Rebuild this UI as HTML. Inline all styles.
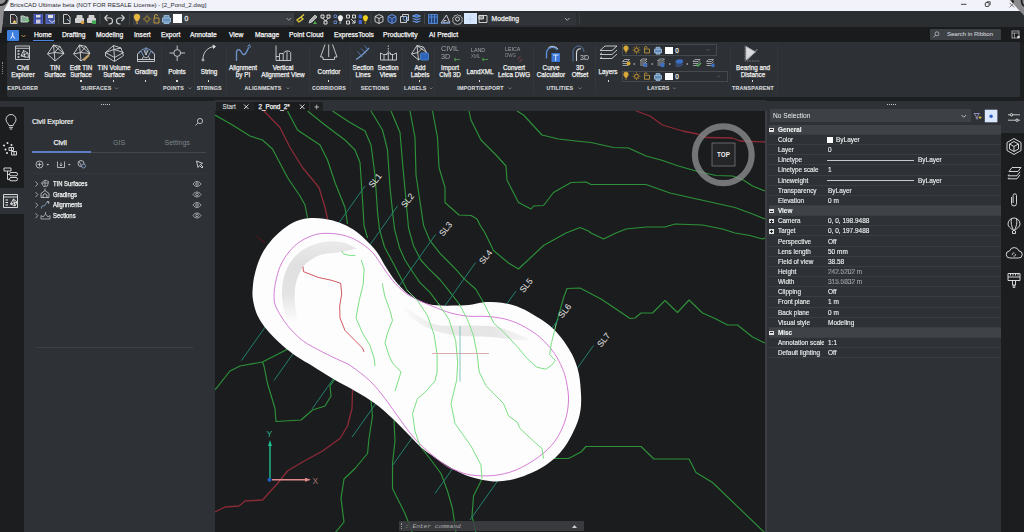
<!DOCTYPE html>
<html><head><meta charset="utf-8"><title>BricsCAD</title>
<style>
*{box-sizing:border-box;margin:0;padding:0}
html,body{width:1024px;height:532px;overflow:hidden;background:#1c1e20;font-family:"Liberation Sans",sans-serif;color:#fff}
.abs,#root *{position:absolute}
#root{position:relative;width:1024px;height:532px;overflow:hidden}
#root svg *{position:static}
#title{left:0;top:0;width:1024px;height:11.2px;background:#f2f2fa;color:#2a2a2e;font-size:6.15px;line-height:11px}
#title span{left:10px;top:-1px;white-space:nowrap}
#tb{left:0;top:11px;width:1024px;height:16px;background:#2b2e31}
#menu{left:0;top:26.5px;width:1024px;height:16px;background:#191b1d}
.tab{top:3px;font-size:6.7px;line-height:9px;white-space:nowrap;color:#f4f4f4;-webkit-text-stroke:.25px #f4f4f4}
#rib{left:7px;top:42px;width:1013px;height:55px;background:#2d3135;border-radius:1.5px}
.rl{font-size:7px;line-height:7.2px;text-align:center;white-space:nowrap;color:#f2f2f2;-webkit-text-stroke:.25px #f2f2f2;transform:translateX(-50%) scaleX(.9)}
.dot{width:1.6px;height:1.3px;background:#d8d8d8}
.it{color:#a4a8ac;line-height:8px;white-space:nowrap;transform:scaleX(.95);transform-origin:0 0}
.gl{font-size:5.3px;line-height:6px;letter-spacing:.2px;font-weight:bold;color:#d2d4d7;-webkit-text-stroke:.15px #d2d4d7;white-space:nowrap;transform:translateX(-50%)}
.dd{width:3px;height:3px}
.sep{top:3px;width:1px;height:49px;background:#33373b}
#lstrip{left:0;top:107px;width:24px;height:425px;background:#1b1d1f}
#lpanel{left:24px;top:100.5px;width:191.5px;height:432px;background:#2e3236}
#lgap{left:215.4px;top:111px;width:.8px;height:421px;background:#34373a}
#dtabs{left:215px;top:100.2px;width:551px;height:11px;background:#2e3236}
#canvas{left:215px;top:111px;width:551px;height:421px;background:#1b1c1e;overflow:hidden}
#rpanel{left:766px;top:100.5px;width:235px;height:432px;background:#2e3236}
#rstrip{left:1000.5px;top:100.5px;width:24px;height:432px;background:#1b1d1f}
.row{left:3px;width:232px;height:10.13px;font-size:7.2px;line-height:10.13px;white-space:nowrap;color:#f2f3f4;-webkit-text-stroke:.12px #f2f3f4;border-bottom:.6px solid #3a3e42}
.row b{left:9.3px;font-weight:normal;font-size:6.9px;transform:scaleX(.92);transform-origin:0 50%}
.row i{left:58.6px;font-style:normal;font-size:6.9px;transform:scaleX(.94);transform-origin:0 50%}
.hdr{background:#3f4347;font-weight:bold}
.hdr b{font-weight:bold;left:9px}
.pm{left:0;top:2.8px;width:4.6px;height:4.4px;background:#e4e4e4}
.pm.plus:before{content:"";position:absolute;left:1.8px;top:.8px;width:.9px;height:2.8px;background:#222}
.pm:after{content:"";position:absolute;left:.9px;top:1.8px;width:2.9px;height:.9px;background:#222}
svg .g{fill:none;stroke:#2d9139;stroke-width:1.15;stroke-linejoin:round}
svg .r{fill:none;stroke:#8c2a36;stroke-width:1.3;stroke-linejoin:round}
svg .dr{fill:none;stroke:#4f1820;stroke-width:1.1}
svg .c{fill:none;stroke:#23806f;stroke-width:1}
svg .m{fill:none;stroke:#cf6fd0;stroke-width:.9}
svg .ig{fill:none;stroke:#7ce084;stroke-width:1;stroke-linejoin:round}
svg .ir{fill:none;stroke:#cf4f5a;stroke-width:.95;stroke-linejoin:round}
svg .sl{font-size:8.6px;fill:#e6e6e6;font-family:"Liberation Sans",sans-serif}
svg .ax{font-size:8.5px;font-family:"Liberation Sans",sans-serif}
svg .top{font-size:6.3px;font-weight:bold;fill:#f0f0f0;font-family:"Liberation Sans",sans-serif}
.tree{left:29px;font-size:6.7px;line-height:9px;white-space:nowrap;color:#f4f4f4;-webkit-text-stroke:.25px #f4f4f4;transform:scaleX(.88);transform-origin:0 50%}
</style></head><body><div id="root">
<div id="title"><span>BricsCAD Ultimate beta (NOT FOR RESALE License) - [2_Pond_2.dwg]</span>
<svg class="abs" style="left:930px;top:0" width="94" height="11" viewBox="930 0 94 11"><path d="M961,4.300h5.500" stroke="#444" stroke-width="1" fill="none"/><rect x="985.300" y="2.600" width="3.800" height="3.800" rx=".8" fill="none" stroke="#333" stroke-width="1"/><path d="M986.800,1.700h3.400v3.400" fill="none" stroke="#333" stroke-width=".8"/><path d="M1009.500,2.800l4.600,4.600M1014.100,2.800l-4.600,4.600" stroke="#555" stroke-width=".8"/></svg></div>
<div id="tb">
<div style="left:132.500px;top:1.500px;width:161px;height:12.500px;background:#3a3d42"></div>
<div style="left:488px;top:1.500px;width:88px;height:12.500px;background:#313438"></div>
<div style="left:464px;top:1.500px;width:12.500px;height:11.500px;background:#d6e6fb"></div>
<div style="left:173px;top:3px;width:8.500px;height:8.500px;background:#fff"></div>
<div style="left:184.500px;top:3.200px;font-size:6.8px;line-height:9px;color:#e6e6e6;-webkit-text-stroke:.3px #e6e6e6">0</div>
<div style="left:491.500px;top:3.200px;font-size:6.8px;line-height:9px;color:#ececec;-webkit-text-stroke:.25px #ececec">Modeling</div>
<svg class="abs" style="left:0;top:0" width="600" height="16" fill="none" stroke-width=".9" stroke="#dcdcdc">
<path d="M2.500,3v10" stroke="#b0b0b0" stroke-dasharray="1 1.200"/>
<path d="M10.500,3.500h4l2.500,2.500v6.500h-6.500z"/><path d="M14.500,9l2,2l-2,2l-2,-2z" fill="#d8c060" stroke="none"/><path d="M12,6l2,3" stroke="#a03050"/>
<path d="M21,5h3l1,1h3v5h-7z" fill="#8a9" stroke="#cfd8d0"/><path d="M25,9.500h4l-1.500,-1.500M29,9.500l-1.500,1.500" stroke="#6c6"/>
<rect x="34" y="3.500" width="8.500" height="9" fill="#3848a8" stroke="#5868c8"/><rect x="36" y="4" width="4.500" height="2.500" fill="#dcdcdc" stroke="none"/><rect x="36" y="8.500" width="4.500" height="4" fill="#c8c8d8" stroke="none"/>
<rect x="46" y="3.500" width="8.500" height="9" fill="#4858a8" stroke="#6878c8"/><rect x="48" y="4" width="5" height="3" fill="#e0e0e0" stroke="none"/><path d="M49,9l3,2.500l3,-2" stroke="#e8e8e8"/>
<path d="M58.500,2.500v11" stroke="#44484c"/>
<path d="M63.500,3.500h4l2.500,2.500v6.500h-6.500z"/><path d="M67,8l3,3" stroke="#a8c8e8"/>
<path d="M75.500,7.500h8v4h-8zM77,7.500v-3h5v3" fill="#cfcfcf"/><circle cx="82.500" cy="11.500" r="1.700" fill="#e0a040" stroke="none"/>
<path d="M87.500,7.500h8v4h-8zM89,7.500v-3h5v3" fill="#cfcfcf"/><rect x="92" y="9.500" width="4" height="3.500" fill="#40a850" stroke="none"/>
<path d="M100,2.500v11" stroke="#44484c"/>
<path d="M104.500,7l3,-3M104.500,7l3,3M104.500,7h5a3,3 0 0 1 0,6h-1" stroke="#d0d0d0" stroke-width="1.100"/>
<path d="M124.500,7l-3,-3M124.500,7l-3,3M124.500,7h-5a3,3 0 0 0 0,6h1" stroke="#d0d0d0" stroke-width="1.100"/>
<path d="M129.500,2.500v11" stroke="#44484c"/>
<path d="M136,10c0,-1.500 -1.800,-2 -1.800,-4a2.800,2.800 0 0 1 5.600,0c0,2 -1.800,2.500 -1.800,4zM136,12h2" fill="#e8b840" stroke="#e8b840"/>
<circle cx="147" cy="8" r="2.300" stroke="#b89030"/><path d="M147,3.800v1M147,11.200v1M142.800,8h1M150.200,8h1" stroke="#b89030"/>
<path d="M154,7h5v5h-5zM154.500,7v-2a1.500,1.500 0 0 1 3,0" stroke="#c8a040"/>
<path d="M162.500,7h8v4h-8zM164,7v-2.500h5v2.500M164,11v1.500h5v-1.500" stroke="#9cc0e0" fill="#6890b8"/>
<path d="M286.500,7l2.300,2.300l2.300,-2.300" stroke="#a8acb0"/>
<path d="M297,9l4,-3l2,2l-4,3zM301,6l3,-2.500" stroke="#e8d040" stroke-width="1.300"/>
<path d="M309,12l1,-3l5,-5l2,2l-5,5z" fill="#b0b0b0" stroke="#c8c8c8"/><path d="M315,10l2,3h-4z" fill="#50b050" stroke="none"/>
<path d="M321,4h3v3h-3zM327,4h3v3h-3zM324,10h3v3h-3zM322.500,7l3,3M328.500,7l-3,3" stroke="#f0f0f0"/>
<path d="M334,4h2.500v2.500h-2.500zM334,10h2.500v2.500h-2.500z" stroke="#6888d0"/><path d="M339.500,10c0,-1.200 -1.300,-1.700 -1.300,-3.200a2.200,2.200 0 0 1 4.400,0c0,1.500 -1.300,2 -1.300,3.200zM339.500,12h1.600" fill="#f0f0f0" stroke="#f0f0f0"/>
<path d="M346.500,4h3v3h-3zM352.500,4h3v3h-3zM346.500,10h3v3h-3zM351,8l4,4M355,9v3h-3" stroke="#ececec"/>
<path d="M359,4h2.500v3h-2.500zM359,9.500h2.500v3h-2.500z" fill="#4060d0" stroke="#4868d8"/><path d="M364.500,10c0,-1.200 -1.300,-1.700 -1.300,-3.200a2.200,2.200 0 0 1 4.400,0c0,1.500 -1.300,2 -1.300,3.200zM364.500,12h1.600" fill="#f0d020" stroke="#f0d020"/>
<path d="M371,2.500v11" stroke="#44484c"/>
<path d="M379,3.500l4,2v5l-4,2l-4,-2v-5zM375,5.500l4,2l4,-2M379,7.500v5"/>
<path d="M392,3.500l4,2v5l-4,2l-4,-2v-5zM388,5.500l4,2l4,-2M392,7.500v5" stroke="#6898e0" fill="#28407a"/>
<path d="M400.500,5.500h6v6h-6zM402.500,5.500v-2h6v6h-2" stroke="#e0e0e0"/><circle cx="405.500" cy="7.500" r="2.200" stroke="#6898e0"/>
<path d="M416.500,3.500l4,1.500l-4,1.500l-4,-1.500zM412.500,7.500l4,1.500l4,-1.500M412.500,10l4,1.500l4,-1.500" stroke="#78a8e8" fill="#3868c0"/>
<path d="M424.500,2.500v11" stroke="#44484c"/>
<path d="M428.500,3.500h9v9h-9zM428.500,6h9M431.500,3.500v9M434.500,3.500v9" stroke="#5888d8" fill="#24487a"/>
<path d="M441,12h9l-3.500,-8zM444,12v-2.500h2.500M446.500,12l2,-2" stroke="#d8d8e8"/><path d="M441,12h9" stroke="#6898e0"/>
<circle cx="457.500" cy="8" r="2"/><path d="M457.500,3.500l1.200,1.300l1.800,-.3l.5,1.700l1.500,1l-.7,1.600l.7,1.600l-1.500,1l-.5,1.700l-1.800,-.3l-1.200,1.300l-1.200,-1.300l-1.800,.3l-.5,-1.700l-1.500,-1l.7,-1.600l-.7,-1.600l1.500,-1l.5,-1.700l1.800,.3z" stroke="#c8c8c8" stroke-width=".8"/>
<path d="M466,8h8.500M470.200,4v8" stroke="#b8d0f0" stroke-width=".7"/>
<path d="M479,4.500h8v7h-8z" stroke="#e0e0e0"/><path d="M479,4.500h4.500v3.500h-4.500z" fill="#8a8e92" stroke="#e0e0e0"/>
<path d="M565,7l2.300,2.300l2.300,-2.300" stroke="#b8bcc0"/>
<path d="M579.500,2v12" stroke="#3a3e42"/>
</svg>
</div>

<div id="menu">
<div style="left:7px;top:3px;width:11.5px;height:11px;background:#3f7fe0;border-radius:1px"></div>
<svg class="abs" style="left:7px;top:3px" width="22" height="11"><path d="M5.700,2.500v3l-2,3M5.700,5.500l2,3" stroke="#fff" stroke-width="1" fill="none"/><path d="M14.500,5l2,2l2,-2" stroke="#c9a04a" stroke-width=".9" fill="none"/></svg>
<div class="tab" style="left:34px">Home</div><div style="left:33px;top:13.5px;width:21px;height:1.3px;background:#4d84e0"></div>
<div class="tab" style="left:62px">Drafting</div>
<div class="tab" style="left:96px">Modeling</div>
<div class="tab" style="left:134px">Insert</div>
<div class="tab" style="left:161px">Export</div>
<div class="tab" style="left:190px">Annotate</div>
<div class="tab" style="left:229px">View</div>
<div class="tab" style="left:255px">Manage</div>
<div class="tab" style="left:289px">Point Cloud</div>
<div class="tab" style="left:334px">ExpressTools</div>
<div class="tab" style="left:383px">Productivity</div>
<div class="tab" style="left:429px">AI Predict</div>
<div style="left:930px;top:2.500px;width:71px;height:11px;background:#3d4145;border-radius:1px"></div>
<svg class="abs" style="left:930px;top:2.500px" width="90" height="11"><circle cx="7" cy="4.800" r="2" fill="none" stroke="#b8bcc0" stroke-width=".8"/><path d="M5.500,6.300l-2,2" stroke="#b8bcc0" stroke-width=".9"/><rect x="82" y="2" width="7" height="7" fill="none" stroke="#b8bcc0" stroke-width=".8"/><path d="M82,4h7M84.500,4v5" stroke="#b8bcc0" stroke-width=".7"/><circle cx="88.500" cy="8" r="1.300" fill="#e0e0e0"/></svg>
<div class="tab" style="left:947px;top:3.500px;font-size:6px;color:#b6babf;-webkit-text-stroke:.2px #b6babf">Search in Ribbon</div>
</div>

<div id="rib">
<div class="rl" style="left:15.8px;top:22.3px">Civil</div>
<div class="rl" style="left:15.8px;top:29.3px">Explorer</div>
<div class="rl" style="left:48.2px;top:22.3px">TIN</div>
<div class="rl" style="left:48.2px;top:29.3px">Surface</div>
<div class="rl" style="left:74.2px;top:22.3px">Edit TIN</div>
<div class="rl" style="left:74.2px;top:29.3px">Surface</div>
<div class="dot" style="left:73.4px;top:38.3px"></div>
<div class="rl" style="left:106.5px;top:22.3px">TIN Volume</div>
<div class="rl" style="left:106.5px;top:29.3px">Surface</div>
<div class="dot" style="left:105.7px;top:38.3px"></div>
<div class="rl" style="left:138.5px;top:26.1px">Grading</div>
<div class="dot" style="left:137.7px;top:38.3px"></div>
<div class="rl" style="left:170.0px;top:26.1px">Points</div>
<div class="dot" style="left:169.2px;top:38.3px"></div>
<div class="rl" style="left:201.5px;top:26.1px">String</div>
<div class="dot" style="left:200.7px;top:38.3px"></div>
<div class="rl" style="left:235.5px;top:22.3px">Alignment</div>
<div class="rl" style="left:235.5px;top:29.3px">by PI</div>
<div class="rl" style="left:276.3px;top:22.3px">Vertical</div>
<div class="rl" style="left:276.3px;top:29.3px">Alignment View</div>
<div class="rl" style="left:321.5px;top:26.1px">Corridor</div>
<div class="dot" style="left:320.7px;top:38.3px"></div>
<div class="rl" style="left:355.6px;top:22.3px">Section</div>
<div class="rl" style="left:355.6px;top:29.3px">Lines</div>
<div class="rl" style="left:381.3px;top:22.3px">Section</div>
<div class="rl" style="left:381.3px;top:29.3px">Views</div>
<div class="rl" style="left:412.6px;top:22.3px">Add</div>
<div class="rl" style="left:412.6px;top:29.3px">Labels</div>
<div class="dot" style="left:411.8px;top:38.3px"></div>
<div class="rl" style="left:443.4px;top:22.3px">Import</div>
<div class="rl" style="left:443.4px;top:29.3px">Civil 3D</div>
<div class="rl" style="left:472.5px;top:26.1px">LandXML</div>
<div class="dot" style="left:471.7px;top:38.3px"></div>
<div class="rl" style="left:506.6px;top:22.3px">Convert</div>
<div class="rl" style="left:506.6px;top:29.3px">Leica DWG</div>
<div class="rl" style="left:544.3px;top:22.3px">Curve</div>
<div class="rl" style="left:544.3px;top:29.3px">Calculator</div>
<div class="rl" style="left:573.4px;top:22.3px">3D</div>
<div class="rl" style="left:573.4px;top:29.3px">Offset</div>
<div class="rl" style="left:601.3px;top:26.1px">Layers</div>
<div class="dot" style="left:600.5px;top:38.3px"></div>
<div class="rl" style="left:745.7px;top:22.3px">Bearing and</div>
<div class="rl" style="left:745.7px;top:29.3px">Distance</div>
<div class="dot" style="left:744.9px;top:38.3px"></div>
<div class="gl" style="left:15.7px;top:43.2px">EXPLORER</div>
<div class="gl" style="left:89.2px;top:43.2px">SURFACES</div>
<div class="gl" style="left:166.5px;top:43.2px">POINTS</div>
<div class="gl" style="left:202.3px;top:43.2px">STRINGS</div>
<div class="gl" style="left:256.0px;top:43.2px">ALIGNMENTS</div>
<div class="gl" style="left:322.0px;top:43.2px">CORRIDORS</div>
<div class="gl" style="left:368.0px;top:43.2px">SECTIONS</div>
<div class="gl" style="left:408.3px;top:43.2px">LABELS</div>
<div class="gl" style="left:473.5px;top:43.2px">IMPORT/EXPORT</div>
<div class="gl" style="left:552.8px;top:43.2px">UTILITIES</div>
<div class="gl" style="left:651.3px;top:43.2px">LAYERS</div>
<div class="gl" style="left:746.0px;top:43.2px">TRANSPARENT</div>
<div class="sep" style="left:154.0px"></div>
<div class="sep" style="left:187.0px"></div>
<div class="sep" style="left:219.0px"></div>
<div class="sep" style="left:302.0px"></div>
<div class="sep" style="left:343.0px"></div>
<div class="sep" style="left:395.0px"></div>
<div class="sep" style="left:427.0px"></div>
<div class="sep" style="left:526.0px"></div>
<div class="sep" style="left:588.0px"></div>
<div class="sep" style="left:722.5px"></div>
<div class="sep" style="left:769.5px"></div>
<div style="left:614.5px;top:1.5px;width:95px;height:12.500px;border:.8px solid #464a4e;background:#2b2f33"></div>
<div style="left:614.5px;top:28.5px;width:106px;height:11.500px;border:.8px solid #464a4e;background:#2b2f33"></div>
<div style="left:658.0px;top:4.5px;width:7.500px;height:7.500px;background:#fff"></div>
<div style="left:658.0px;top:30.7px;width:7.500px;height:7.500px;background:#fff"></div>
<div class="rl" style="left:670.3px;top:4.7px">0</div>
<div class="rl" style="left:670.3px;top:30.9px">0</div>
<div class="it" style="left:434.3px;top:3.0px;font-size:7.6px">CIVIL</div>
<div class="it" style="left:434.3px;top:11.3px;font-size:7.6px">3D</div>
<div class="it" style="left:463.5px;top:3.8px;font-size:5.6px">LAND</div>
<div class="it" style="left:464.0px;top:11.0px;font-size:4.8px;color:#8a8e92">XML</div>
<div class="it" style="left:497.5px;top:3.3px;font-size:5.6px">LEICA</div>
<div class="it" style="left:498.0px;top:10.3px;font-size:4.8px;color:#8a8e92">DWG</div>
<div class="it" style="left:572.5px;top:11.8px;font-size:7.4px;color:#d8dadc">3D</div>
<svg class="abs" style="left:0;top:0" width="1013" height="55" viewBox="7 42 1013 55" fill="none" stroke="#dadcde" stroke-width=".85" stroke-linejoin="round"><g transform="translate(-7,-42)"></g><path d="M15.500,46h14v13.500h-14zM15.500,48.300h14"/><path d="M17.500,51h2M17.500,54h2M17.500,57h2" stroke-width="1.300"/><path d="M21,56l2.500,-5.500l4.500,2.500l.5,4.500zM23.500,50.500l1.500,7M21,56l7,-3"/><path d="M47.500,54l6,-9l6.500,1.500l4,7l-9,7.500zM53.500,45l1.500,16M53.500,45l10.500,8.500M47.500,54l7,-1.500l5.500,-6M54.500,52.500l9.500,1"/><path d="M73.500,54l6,-9l6.500,1.500l4,7l-9,7.500zM79.500,45l1.500,16M79.500,45l10.500,8.500M73.500,54l7,-1.500l5.500,-6M80.500,52.500l9.500,1"/><path d="M83.500,60.500l5.500,-5.500" stroke="#c8a060" stroke-width="2"/><path d="M105.500,52.500l8,-7l7.500,2.500l2.500,7.500l-9,6l-9,-5.500zM105.500,52.500l9,5v3.500M114.500,57.500l9,-5M113.500,45.500l1,12M105.500,52.500l8.500,-3l7,-1.500M114,49.500l9.500,3"/><path d="M137.500,61.500v-7.500l3,-3M154.500,61.500v-7.500l-3,-3M137.500,61.500h17M137.500,59.500h17M142,59.500l1.500,-3l2.500,1.500l2.500,-1.500l1.500,3"/><path d="M139,53.500a7.500,7.500 0 0 1 14,0M141,51l2.500,5M151,51l-2.500,5M146,47v6" stroke="#88a8d8"/><path d="M144,50l2,5l2,-5" stroke="#dadcde"/><circle cx="177.200" cy="53" r="3.400"/><path d="M177.200,45.500v4M177.200,56.500v4.500M169.500,53h4.300M180.600,53h4.500"/><path d="M203,59c0,-7 5,-12 11.500,-12.500"/><circle cx="203" cy="60" r="1"/><path d="M213,45l2.500,1.500l-2,2z" fill="#dadcde"/><path d="M236.500,61v-8c0,-4 3,-4.500 4.500,-1.500s3,4 4.500,2s2,-4 3.500,-6.500" stroke="#7aa0dc" stroke-width="1.300"/><path d="M236.500,61v-8c0,-4 3,-4.500 4.500,-1.500s3,4 4.500,2s2,-4 3.500,-6.500" stroke="#30507a" stroke-width=".4" stroke-dasharray="1 1"/><path d="M247.500,46.500l2,-2l1,3" stroke="#7aa0dc"/><path d="M276,45.500v15h15M276,56.500h3.500v4M279.500,56.500v-3h3.700v7M283.200,53.500c2,-3 5.500,-3.500 7.500,-1v8M287,51.500v9"/><path d="M325,44.500l-4.500,12.500h2.500v2.500h11.500v-2.500h2.500l-4.500,-12.500M328.700,44.500v12.500"/><path d="M356,59.500c5,-3 9,-7 13,-11.500" stroke="#7a9cd0" stroke-width="1.200"/><path d="M357.500,51.500l5,5.500M361,48.500l5,5M364.500,45.500l3.500,4.500" stroke="#5a80c0"/><path d="M380.500,60v-7l3,1.500h3.500v-1.500h3.500v1.500h3l3,-1.500v7zM384,54.500v5.500M388.300,53v7M392.500,54.500v5.500"/><path d="M388.300,45.500v7" stroke-dasharray="1.500 1"/><path d="M411.500,54l5.500,-8.500l6.500,1.500l3,5.500l-8,7.500zM417,45.500l1.500,14.500M417,45.500l9.500,7M411.500,54l6.500,-1.500l5.500,-5.500"/><rect x="420.500" y="53" width="8" height="7" rx="1" fill="#2d64b8" stroke="#4a84d8"/><path d="M460,59.500h-6M456,57.800l-2,1.700l2,1.700" stroke="#4a9a4a"/><path d="M488,59.500h-6M484,57.800l-2,1.700l2,1.700" stroke="#4a9a4a"/><path d="M520.500,57a2,2 0 0 0 -2,2.500M519.500,61.500a2,2 0 0 0 2,-2.500" stroke="#a04050"/><path d="M546.500,58.500v-5a6,6 0 0 1 11,-3.500" stroke="#5a90e0" stroke-width="1.300"/><path d="M548.500,47.500a7,7 0 0 1 9.500,1.500" stroke="#dadcde"/><rect x="551.500" y="53" width="8.500" height="9" fill="#3a78d8" stroke="none"/><path d="M553,55h5.500M555.700,55v6" stroke="#dbe8ff" stroke-width="1"/><path d="M573,61.500v-9.500a5.500,6 0 0 1 11,0" stroke="#5a80b8"/><path d="M576.500,61v-8.500a3.500,4 0 0 1 4.500,-3.500" stroke="#dadcde" stroke-width="1.100"/><path d="M605,46l-5,4.500h12l5,-4.500zM600,54.500h12l5,-4.500M600,58.500h12l5,-4.500M600,54.500l2,-1.800M600,58.500l2,-1.800"/><path d="M625.200,51.5c0,-1.200 -1.500,-1.700 -1.500,-3.500a2.300,2.300 0 0 1 4.600,0c0,1.800 -1.500,2.300 -1.500,3.500zM625.200,53.0h1.600" stroke="#d8a838" fill="#d8a838" stroke-width=".6"/><circle cx="636.500" cy="50.0" r="2" stroke="#d8a030"/><path d="M636.500,46.2v1M636.500,52.8v1M632.700,50.0h1M639.300,50.0h1M633.800,47.3l.7,.7M638.500,52.0l.7,.7M639.200,47.3l-.7,.7M634.500,52.0l-.7,.7" stroke="#d8a030"/><path d="M644.500,49.0h5v4h-5zM644.500,49.0v-1.200a1.300,1.300 0 0 1 2.600,0" stroke="#c09838"/><path d="M654.500,49.3h7v3.500h-7zM656,49.3v-2h4v2M656,52.8v1.300h4v-1.300" stroke="#a0c0e0" fill="#6088b0"/><path d="M625.200,77.8c0,-1.200 -1.500,-1.700 -1.500,-3.500a2.300,2.300 0 0 1 4.600,0c0,1.800 -1.500,2.300 -1.500,3.500zM625.200,79.3h1.600" stroke="#d8a838" fill="#d8a838" stroke-width=".6"/><circle cx="636.500" cy="76.3" r="2" stroke="#d8a030"/><path d="M636.500,72.5v1M636.500,79.1v1M632.700,76.3h1M639.300,76.3h1M633.800,73.6l.7,.7M638.500,78.3l.7,.7M639.200,73.6l-.7,.7M634.500,78.3l-.7,.7" stroke="#d8a030"/><path d="M644.500,75.3h5v4h-5zM644.500,75.3v-1.200a1.300,1.300 0 0 1 2.600,0" stroke="#c09838"/><path d="M654.500,75.6h7v3.500h-7zM656,75.6v-2h4v2M656,79.1v1.300h4v-1.300" stroke="#a0c0e0" fill="#6088b0"/><path d="M706.500,49l1.500,1.500l1.500,-1.500" stroke="#5a5e62"/><path d="M717,75.500l1.500,1.500l1.500,-1.500" stroke="#4a6a52"/><path d="M622.5,61.5h5l2,-2h-5zM622.5,63.5h5l2,-2M622.5,65.5h5l2,-2" stroke="#d0d2d4" stroke-width=".7"/><circle cx="628.500" cy="63.500" r="2" fill="#d8a838" stroke="none"/><path d="M633.500,64h1.500" stroke="#e8e8e8" stroke-width="1"/><path d="M640.0,61.0h5l2,-2h-5zM640.0,63.0h5l2,-2M640.0,65.0h5l2,-2" stroke="#d0d2d4" stroke-width=".7"/><rect x="643.500" y="63.500" width="3.500" height="3" fill="#3a68b8" stroke="#6a90d0" stroke-width=".5"/><path d="M651.500,64h1.500" stroke="#e8e8e8" stroke-width="1"/><path d="M657.5,61.0h5l2,-2h-5zM657.5,63.0h5l2,-2M657.5,65.0h5l2,-2" stroke="#d0d2d4" stroke-width=".7"/><circle cx="662.500" cy="65" r="2.200" fill="#3a70c8" stroke="none"/><path d="M669,64h1.500" stroke="#e8e8e8" stroke-width="1"/><path d="M675.5,62.0h5l2,-2h-5zM675.5,64.0h5l2,-2M675.5,66.0h5l2,-2" stroke="#4a80d8" stroke-width=".7"/><ellipse cx="679.500" cy="61.500" rx="3.500" ry="2" fill="#3a70c8" stroke="none"/><path d="M686.500,64h1.500" stroke="#e8e8e8" stroke-width="1"/><path d="M693.0,61.5h5l2,-2h-5zM693.0,63.5h5l2,-2M693.0,65.5h5l2,-2" stroke="#d0d2d4" stroke-width=".7"/><path d="M696.500,64.500l1.500,1.700l3,-3.200" stroke="#48b050" stroke-width="1.200"/><path d="M706.5,61.5h5l2,-2h-5zM706.5,63.5h5l2,-2M706.5,65.5h5l2,-2" stroke="#d0d2d4" stroke-width=".7"/><circle cx="713" cy="65.500" r="1.800" fill="#3a70c8" stroke="none"/><path d="M746,46.500l9.500,5.500l-9.500,8z" fill="#dcdcde" stroke="#b8b8c0"/><path d="M757.500,49l-10,11" stroke="#a0a4a8"/><path d="M745,45.500v15.500h15" stroke="#b0b4b8" stroke-dasharray=".8 .8" stroke-width=".7"/><g stroke="#8a8e92" stroke-width=".7"><path d="M115.0,87.5l1.500,1.500l1.500,-1.500"/><path d="M188.5,87.5l1.500,1.500l1.500,-1.500"/><path d="M286.5,87.5l1.500,1.500l1.500,-1.500"/><path d="M429.5,87.5l1.500,1.500l1.500,-1.500"/><path d="M508.5,87.5l1.500,1.500l1.500,-1.500"/><path d="M578.5,87.5l1.500,1.500l1.500,-1.500"/><path d="M673.0,87.5l1.500,1.500l1.500,-1.500"/></g></svg>
</div>
<div style="left:2px;top:62px;width:1.500px;height:12px;border-left:1.200px dotted #8a8e92"></div>
<div style="left:0;top:100.500px;width:24px;height:7px;background:#2e3236"></div><div id="lstrip"><div style="left:0;top:81px;width:24px;height:25.500px;background:#2e3236"></div>
<svg class="abs" style="left:0;top:0" width="24" height="120" fill="none" stroke="#e6e6e6" stroke-width=".9">
<g transform="translate(11,15)"><path d="M-2.200,3.500c0,-2 -2.800,-3 -2.800,-6a5,5 0 0 1 10,0c0,3 -2.800,4 -2.800,6zM-2,5.300h4M-1.300,7h2.600"/></g>
<g transform="translate(10,41.500)"><g fill="#e6e6e6" stroke="none"><circle cx="-6" cy="-3" r="1"/><circle cx="-2.500" cy="-5.500" r="1"/><circle cx="1.500" cy="-3.500" r="1"/><circle cx="-4.500" cy="1" r="1"/><circle cx="-3" cy="4.500" r="1"/></g><path d="M-1,-1h4.500v3h-4.500zM1.500,3h5v3.500h-5zM1.500,-1v3M4,3v3.500"/></g>
<g transform="translate(11,68)"><path d="M-7,-7h7v3h-7zM-3.500,-4v8.500h2M-3.500,-.500h2"/><rect x="-1.500" y="-2.500" width="8" height="3.300" rx="1.500"/><rect x="-1.500" y="2.500" width="8" height="3.300" rx="1.500"/></g>
<g transform="translate(10.500,94)"><path d="M-7,-6.500h14v13h-14zM-7,-4h14"/><path d="M-5,-1h2.500M-5,1.500h2.500M-5,4h2.500" stroke-width="1.200"/><path d="M0,3l3,-5l3.500,3l-2,4zM3,-2l1.500,7M0,3l6.500,-2"/></g>
</svg></div>
<div id="lpanel">
<div style="left:77px;top:3px;width:9px;height:1.200px;border-top:1.200px dotted #c8c8c8"></div>
<div style="left:8px;top:16.500px;font-size:7px;line-height:10px;white-space:nowrap;color:#f2f2f2;-webkit-text-stroke:.2px #f2f2f2">Civil Explorer</div>
<svg class="abs" style="left:168px;top:15px" width="14" height="12" fill="none" stroke="#c4c8cc" stroke-width=".9"><circle cx="8" cy="5" r="2.600"/><path d="M6,7l-2.500,2.500"/></svg>
<div style="left:29.500px;top:37.500px;font-size:7px;line-height:9px;color:#f2f2f2;-webkit-text-stroke:.25px #f2f2f2">Civil</div>
<div style="left:89px;top:37.500px;font-size:7px;line-height:9px;color:#7d8287">GIS</div>
<div style="left:140.500px;top:37.500px;font-size:7px;line-height:9px;color:#7d8287">Settings</div>
<div style="left:8px;top:51.300px;width:174px;height:.8px;background:#43474b"></div>
<div style="left:8px;top:50.400px;width:58.500px;height:1.800px;background:#5b80c8"></div>
<svg class="abs" style="left:0;top:55.200px" width="190" height="18" fill="none" stroke="#d0d3d6" stroke-width=".8">
<circle cx="15.500" cy="8.500" r="3.500"/><path d="M13.500,8.500h4M15.500,6.500v4"/><path d="M22.500,8l1.300,1.400l1.300,-1.400z" fill="#d0d3d6" stroke="none"/>
<path d="M33.500,5.500v6h7v-6M37,6.500v3.500M35.700,8.700l1.300,1.300l1.300,-1.300"/><path d="M44,8l1.300,1.400l1.300,-1.400z" fill="#d0d3d6" stroke="none"/>
<circle cx="57" cy="7.500" r="3"/><path d="M55,5.500c1,1 .5,2 1.500,2.500s1,1 .5,2" /><circle cx="59.500" cy="10" r="2" stroke="#8fa8d8" fill="#2e3236"/>
<path d="M172.500,5l1.500,6.500l1.500,-2l2.500,2.500l1,-1l-2.500,-2.500l2,-1.200z" stroke="#e8e8e8"/>
</svg>
<div style="left:8px;top:72.500px;width:174px;height:.6px;background:#33373b"></div>
<div class="tree" style="top:78.500px">TIN Surfaces</div>
<div class="tree" style="top:89px">Gradings</div>
<div class="tree" style="top:99.700px">Alignments</div>
<div class="tree" style="top:110.200px">Sections</div>
<svg class="abs" style="left:0;top:76px" width="190" height="48" fill="none" stroke="#b8bcc0" stroke-width=".8">
<path d="M11.500,4.5l2.300,2.500l-2.300,2.500"/><path d="M11.500,15.1l2.300,2.500l-2.300,2.500"/><path d="M11.500,25.7l2.300,2.500l-2.300,2.500"/><path d="M11.500,36.2l2.300,2.500l-2.300,2.500"/>
<path d="M169,7.0c2,-3.300 6,-3.300 8,0c-2,3.300 -6,3.300 -8,0z"/><circle cx="173" cy="7.0" r="1.300"/><path d="M169,17.5c2,-3.300 6,-3.300 8,0c-2,3.300 -6,3.300 -8,0z"/><circle cx="173" cy="17.5" r="1.300"/><path d="M169,28.0c2,-3.300 6,-3.300 8,0c-2,3.300 -6,3.300 -8,0z"/><circle cx="173" cy="28.0" r="1.300"/><path d="M169,38.5c2,-3.300 6,-3.300 8,0c-2,3.300 -6,3.300 -8,0z"/><circle cx="173" cy="38.5" r="1.300"/>
<path d="M21,3l3.500,1.500l-1,4.500l-4,.5l-2,-3.500zM21,3v6.500M17.500,6h7"/>
<path d="M17,20.500v-4l4,-3l4,3v4zM19,20.500v-2.500l2,-1.500l2,1.500v2.500M21,13.500v-2" stroke="#d0d3d6"/>
<path d="M17.500,31.500c0,-5 3,-1 4,-4s2,-2 3,-2.500" stroke="#8fb0e0"/><path d="M23,24.500l2,.3l-.5,2" stroke="#d0d3d6"/>
<path d="M17,42v-3.500l2,1.500l2.500,-3l2.500,3l2,-1.500v3.500zM21.500,37v-2" />
</svg>
<div style="left:12px;top:246.500px;width:157px;height:.7px;background:#3d4145"></div>
</div>

<div id="lgap"></div><div id="dtabs">
<div style="left:1px;top:2.2px;width:37.500px;height:8.5px;background:#1f2123"></div>
<div style="left:39px;top:2.2px;width:55px;height:8.5px;background:#1b1c1e"></div>
<div style="left:95px;top:2.2px;width:13px;height:8.5px;background:#1f2123"></div>
<div class="tab" style="left:7.5px;top:2px;font-size:6.3px;-webkit-text-stroke:0">Start</div>
<div class="tab" style="left:43.5px;top:2px;font-size:6.3px;">2_Pond_2*</div>
<svg class="abs" style="left:0;top:.8px" width="120" height="11"><path d="M29,3.5l4.5,4.5M33.500,3.500l-4.500,4.500M85,3.500l4.500,4.500M89.500,3.500l-4.500,4.500" stroke="#e8e8e8" stroke-width=".9"/><path d="M99.500,6h4.500M101.700,3.700v4.600" stroke="#d0d0d0" stroke-width=".8"/></svg>
</div>
<div id="canvas"><svg id="cv" class="abs" style="left:0;top:0" width="551" height="422" viewBox="215 111 551 422">
<defs><filter id="bl" x="-20%" y="-20%" width="140%" height="140%"><feGaussianBlur stdDeviation="0.7"/></filter>
<linearGradient id="g1" gradientUnits="userSpaceOnUse" x1="0" y1="240" x2="0" y2="322"><stop offset="0" stop-color="#ebebeb"/><stop offset="0.3" stop-color="#e0e0e0"/><stop offset="0.65" stop-color="#e3e3e3"/><stop offset="1" stop-color="#fcfcfc"/></linearGradient>
<linearGradient id="g2" gradientUnits="userSpaceOnUse" x1="404" y1="0" x2="528" y2="0"><stop offset="0" stop-color="#fafafa"/><stop offset="0.25" stop-color="#ebebeb"/><stop offset="0.7" stop-color="#e5e5e5"/><stop offset="1" stop-color="#f6f6f6"/></linearGradient>
<clipPath id="pc"><path d="M252.7,288.2 C253.0,283.9 253.5,279.4 254.7,274.5 C255.8,269.6 257.5,263.8 259.6,258.9 C261.7,254.0 264.1,249.6 267.4,245.2 C270.6,240.8 274.9,236.2 279.1,232.5 C283.3,228.8 287.9,225.1 292.8,222.7 C297.7,220.3 303.2,218.8 308.4,218.2 C313.6,217.5 318.8,218.1 324.0,218.8 C329.2,219.6 334.8,220.9 339.7,222.7 C344.6,224.5 349.2,226.8 353.4,229.6 C357.6,232.4 361.2,235.6 365.1,239.3 C369.0,243.0 373.5,247.4 376.9,252.0 C380.3,256.6 382.4,261.6 385.7,266.7 C388.9,271.8 392.7,277.8 396.4,282.3 C400.1,286.9 403.9,290.7 408.1,294.0 C412.3,297.3 417.0,300.0 421.8,301.9 C426.6,303.8 431.2,304.7 437.0,305.3 C442.8,305.9 450.8,305.7 456.7,305.6 C462.6,305.5 467.4,305.1 472.3,304.5 C477.2,303.9 481.1,302.4 486.0,302.1 C490.9,301.8 496.5,301.9 501.7,302.7 C506.9,303.4 512.1,304.7 517.3,306.6 C522.5,308.6 528.1,311.6 533.0,314.4 C537.9,317.2 542.7,320.3 546.6,323.2 C550.5,326.1 553.1,328.4 556.4,332.0 C559.7,335.6 563.3,340.3 566.2,344.7 C569.1,349.1 571.9,353.5 574.0,358.4 C576.1,363.3 577.7,368.1 578.9,374.0 C580.1,379.9 580.7,388.0 581.0,394.0 C581.3,400.0 581.3,404.7 580.5,410.0 C579.7,415.3 578.8,419.6 576.0,426.0 C573.2,432.4 568.5,442.0 563.5,448.5 C558.5,455.0 553.1,460.2 546.0,465.0 C538.9,469.8 529.3,474.2 521.0,477.0 C512.7,479.8 504.3,481.5 496.0,481.5 C487.7,481.5 477.8,478.9 471.0,477.0 C464.2,475.1 460.2,472.7 455.0,470.0 C449.8,467.3 445.4,464.6 440.0,461.0 C434.6,457.4 427.9,453.1 422.5,448.5 C417.1,443.9 412.5,438.5 407.5,433.5 C402.5,428.5 397.9,423.5 392.5,418.5 C387.1,413.5 381.2,408.1 375.0,403.5 C368.8,398.9 362.1,395.2 355.0,391.0 C347.9,386.8 339.6,382.7 332.5,378.5 C325.4,374.3 318.3,369.6 312.5,366.0 C306.7,362.4 302.5,360.4 297.5,357.0 C292.5,353.6 287.5,349.9 282.5,345.5 C277.5,341.1 271.7,335.5 267.5,330.5 C263.3,325.5 259.9,320.6 257.5,315.5 C255.1,310.4 253.8,304.6 253.0,300.0 C252.2,295.4 252.4,292.4 252.7,288.2Z"/></clipPath></defs>
<polyline class="g" points="215,115 232.5,125 250,136 262.5,140 272.5,149 287.5,177.5 300,196 305,205 307.5,218" />
<polyline class="g" points="287.5,111 297.5,130 320,145 327.5,160 335,182.5 345,207.5 347.5,224" />
<polyline class="g" points="307.5,111 325,125 345,140 355,150 360,162.5 362.5,200 364,225.5 367.5,238" />
<polyline class="g" points="332.5,111 350,122.5 365,131 371,145 375,175 377.6,213 379.5,229.4 384.5,247 393.4,263.4 402,280 407,290" />
<polyline class="g" points="371,111 382.5,130 387.5,150 390,187.5 392.7,213 394.6,229.4 399.7,248.3 405,260 411.3,270 420,282.7 430.2,292.7 437.8,302.8" />
<polyline class="g" points="391,111 400,132.5 402.5,162.5 407.2,213 408.5,228 413.5,245.7 420.8,260 427.7,267.6 440.3,280 450.4,292.7 459.2,304" />
<polyline class="g" points="410,111 415,137.5 416,175 421.7,213 423.6,225.6 430,240.7 440,253.3 446.6,260 455.4,268.8 464.2,278.9 475.6,289 483,301.5" />
<polyline class="g" points="432.5,111 437.5,137.5 439,167.5 445,187.5 445,202.5 459,215 471,215.5 477,219 480,225 485,233 493.5,250.5 508.5,263 518.5,269 543.5,245.5 566,233 580,227.5 588.5,231 591,233 603.5,239 616,233 626,229 646,227 665,227 675,224 702.5,225 722.5,229 735,233 750,235.5 762.5,239 765,238" />
<polyline class="g" points="469,111 471,120 481,140 496,155 506,166 507,180 518.5,202.5 531,209 533.5,206 543.5,205.5 553.5,192.5 571,182.5 586,182 591,184.5 646,184.5 670,193 690,197.5 712.5,202.5 735,207.5 752.5,214 765,219" />
<polyline class="g" points="517,111 523.5,115 542,135 558.5,139 576,141 591,142.5 613.5,147.5 628.5,148 646,156 661,160 678.5,166 696,171 716,175.5 732.5,176 742.5,179.5 752.5,186 765,191" />
<polyline class="g" points="556.4,323.2 563.5,298 567,288.5 580,288 601,299 616,309 630,318.5 635,318 641,313 652.5,313 665,300.5 677.5,312.5 689,300 702.5,313 716,319 727.5,325 737.5,325 752.5,337 765,343" />
<polyline class="g" points="543.5,458.5 568.5,458.5 581,452 586,446.5 641,446.5 654,459 689,459 696,472.5 712.5,482.5 765,533" />
<polyline class="g" points="215,390 230,371 240,366 262.5,362 285,350.5 291,347" />
<polyline class="g" points="262.5,362 264,366 267.5,383.5 275,408.5 276,421.5 301,420 312.5,410 325,406 331,396 330,386 335,378.5" />
<polyline class="g" points="371,400 372.5,416 369,438.5 367.5,453.5 355,468.5 344,479 341,498.5 344,522 335,533" />
<polyline class="g" points="394,420 395,441 392.5,463.5 392.5,488.5 405,513.5 412.5,533" />
<polyline class="g" points="420,446 432.5,462 441,473.5 447.5,491 452.5,508.5 456,533" />
<polyline class="g" points="482,478.5 481,481 473.5,496 472,516 476,533" />
<polyline class="r" points="264,111 280,127.5 290,147.5 302.5,167.5 319,187.5 325,207.5 327.5,219" />
<polyline class="r" points="636,111 650,116 662.5,125 682.5,131 697.5,134 706,137.5 732.5,138 740,141 765,142" />
<polyline class="r" points="352.5,390 352,408.5 347.5,426 340,438.5 322.5,451 302.5,462 287.5,471 277.5,483.5 262.5,500 245,501 239,506 225,507 215,512" />
<polyline class="dr" points="256.6,236.4 265.4,243.2" />
<polyline class="c" points="365,186 241.5,360.5" />
<polyline class="c" points="397.5,206 274,380.5" />
<polyline class="c" points="435.6,234.4 312.1,408.9" />
<polyline class="c" points="475.6,262.5 352.1,437" />
<polyline class="c" points="516,291 392.5,465.5" />
<polyline class="c" points="558.5,319 435,493.5" />
<polyline class="c" points="593.5,345.5 470,520" />
<path d="M252.7,288.2 C253.0,283.9 253.5,279.4 254.7,274.5 C255.8,269.6 257.5,263.8 259.6,258.9 C261.7,254.0 264.1,249.6 267.4,245.2 C270.6,240.8 274.9,236.2 279.1,232.5 C283.3,228.8 287.9,225.1 292.8,222.7 C297.7,220.3 303.2,218.8 308.4,218.2 C313.6,217.5 318.8,218.1 324.0,218.8 C329.2,219.6 334.8,220.9 339.7,222.7 C344.6,224.5 349.2,226.8 353.4,229.6 C357.6,232.4 361.2,235.6 365.1,239.3 C369.0,243.0 373.5,247.4 376.9,252.0 C380.3,256.6 382.4,261.6 385.7,266.7 C388.9,271.8 392.7,277.8 396.4,282.3 C400.1,286.9 403.9,290.7 408.1,294.0 C412.3,297.3 417.0,300.0 421.8,301.9 C426.6,303.8 431.2,304.7 437.0,305.3 C442.8,305.9 450.8,305.7 456.7,305.6 C462.6,305.5 467.4,305.1 472.3,304.5 C477.2,303.9 481.1,302.4 486.0,302.1 C490.9,301.8 496.5,301.9 501.7,302.7 C506.9,303.4 512.1,304.7 517.3,306.6 C522.5,308.6 528.1,311.6 533.0,314.4 C537.9,317.2 542.7,320.3 546.6,323.2 C550.5,326.1 553.1,328.4 556.4,332.0 C559.7,335.6 563.3,340.3 566.2,344.7 C569.1,349.1 571.9,353.5 574.0,358.4 C576.1,363.3 577.7,368.1 578.9,374.0 C580.1,379.9 580.7,388.0 581.0,394.0 C581.3,400.0 581.3,404.7 580.5,410.0 C579.7,415.3 578.8,419.6 576.0,426.0 C573.2,432.4 568.5,442.0 563.5,448.5 C558.5,455.0 553.1,460.2 546.0,465.0 C538.9,469.8 529.3,474.2 521.0,477.0 C512.7,479.8 504.3,481.5 496.0,481.5 C487.7,481.5 477.8,478.9 471.0,477.0 C464.2,475.1 460.2,472.7 455.0,470.0 C449.8,467.3 445.4,464.6 440.0,461.0 C434.6,457.4 427.9,453.1 422.5,448.5 C417.1,443.9 412.5,438.5 407.5,433.5 C402.5,428.5 397.9,423.5 392.5,418.5 C387.1,413.5 381.2,408.1 375.0,403.5 C368.8,398.9 362.1,395.2 355.0,391.0 C347.9,386.8 339.6,382.7 332.5,378.5 C325.4,374.3 318.3,369.6 312.5,366.0 C306.7,362.4 302.5,360.4 297.5,357.0 C292.5,353.6 287.5,349.9 282.5,345.5 C277.5,341.1 271.7,335.5 267.5,330.5 C263.3,325.5 259.9,320.6 257.5,315.5 C255.1,310.4 253.8,304.6 253.0,300.0 C252.2,295.4 252.4,292.4 252.7,288.2Z" fill="#fdfdfd"/>
<g clip-path="url(#pc)"><path d="M286.5,320 C285.9,317.5 283.8,309.7 283.0,305.0 C282.2,300.3 281.8,296.8 282.0,292.0 C282.2,287.2 282.5,281.5 284.0,276.5 C285.5,271.5 287.7,266.2 290.8,261.8 C293.9,257.4 298.0,253.1 302.6,250.0 C307.2,246.9 313.3,244.6 318.2,243.2 C323.1,241.8 327.7,241.4 331.9,241.3 C336.1,241.2 340.4,242.1 343.6,242.8 C346.8,243.5 348.8,244.6 351.0,245.5 C353.2,246.4 356.0,248.0 357.0,248.5 L357,248.5 C355.2,248.9 349.2,250.3 346.0,251.0 C342.8,251.7 341.8,251.9 337.8,252.5 C333.8,253.1 326.9,253.0 322.0,254.5 C317.1,256.0 312.0,258.8 308.4,261.5 C304.8,264.2 302.7,267.2 300.6,271.0 C298.5,274.8 296.7,279.8 295.7,284.3 C294.7,288.8 294.6,293.4 294.7,298.0 C294.8,302.6 295.4,308.0 296.0,312.0 C296.6,316.0 297.7,320.3 298.0,322.0Z" fill="url(#g1)" filter="url(#bl)"/>
<path d="M404,304 C404.6,304.8 404.6,306.1 407.8,308.6 C411.1,311.2 418.3,316.5 423.5,319.3 C428.7,322.1 432.2,324.1 439.0,325.2 C445.8,326.2 455.4,325.4 464.5,325.6 C473.6,325.8 486.3,325.7 493.8,326.6 C501.3,327.5 503.8,329.0 509.5,331.0 C515.2,333.0 524.9,337.2 528.0,338.5 L528,340.5 C524.9,340.3 515.2,339.8 509.5,339.2 C503.8,338.6 501.3,337.7 493.8,337.2 C486.3,336.7 472.0,336.8 464.5,336.3 C457.0,335.8 454.8,335.6 448.9,334.3 C443.0,333.0 435.5,331.1 429.3,328.4 C423.1,325.7 415.9,321.1 411.7,318.0 C407.5,314.9 405.3,311.3 404.0,310.0Z" fill="url(#g2)" filter="url(#bl)"/></g>
<path d="M274.2,300 C273.8,295.7 274.2,289.9 275.2,284.3 C276.2,278.8 277.7,272.1 280.0,266.7 C282.3,261.3 285.5,256.2 288.9,252.0 C292.3,247.8 296.1,244.2 300.6,241.3 C305.2,238.4 311.0,235.7 316.2,234.4 C321.4,233.1 326.7,233.2 331.9,233.5 C337.1,233.8 342.6,234.8 347.5,236.4 C352.4,238.0 356.9,240.4 361.2,243.2 C365.4,246.0 369.4,249.1 373.0,253.0 C376.6,256.9 379.4,262.1 382.7,266.7 C385.9,271.3 388.9,276.2 392.5,280.4 C396.1,284.6 400.3,288.9 404.2,292.0 C408.1,295.1 411.2,296.6 416.0,299.0 C420.8,301.4 427.4,304.2 433.2,306.5 C439.0,308.8 444.9,311.4 450.8,313.0 C456.7,314.6 462.5,315.6 468.4,316.2 C474.3,316.8 480.4,316.0 486.0,316.4 C491.6,316.8 496.5,317.2 501.7,318.3 C506.9,319.4 512.1,320.9 517.3,323.2 C522.5,325.5 528.4,328.9 533.0,332.0 C537.6,335.1 541.1,338.2 544.7,341.8 C548.3,345.4 551.6,349.1 554.5,353.5 C557.4,357.9 560.3,363.4 562.3,368.2 C564.3,372.9 565.5,376.5 566.5,382.0 C567.5,387.5 568.8,394.5 568.5,401.0 C568.2,407.5 567.2,414.3 565.0,421.0 C562.8,427.7 559.4,435.0 555.0,441.0 C550.6,447.0 545.0,452.2 538.5,457.0 C532.0,461.8 523.5,466.9 516.0,470.0 C508.5,473.1 501.0,474.7 493.5,475.5 C486.0,476.3 477.4,475.9 471.0,475.0 C464.6,474.1 459.3,471.7 455.0,470.0 C450.7,468.3 449.6,468.2 445.0,465.0 C440.4,461.8 432.9,455.8 427.5,451.0 C422.1,446.2 417.5,441.8 412.5,436.0 C407.5,430.2 402.1,422.2 397.5,416.0 C392.9,409.8 389.6,404.3 385.0,398.5 C380.4,392.7 375.7,386.4 370.0,381.0 C364.3,375.6 356.0,369.4 351.0,366.0 C346.0,362.6 344.8,362.8 340.0,360.5 C335.2,358.2 328.8,355.3 322.5,352.0 C316.2,348.7 308.3,344.9 302.5,340.5 C296.7,336.1 291.7,330.6 287.5,325.5 C283.3,320.4 279.7,314.2 277.5,310.0 C275.3,305.8 274.6,304.3 274.2,300.0Z" class="m"/>
<polyline class="ig" points="341.7,251 343.6,254 349.5,255.4 355.3,255.4" />
<polyline class="ig" points="361.2,259.9 364.1,268.7 363.2,284.3 359.3,300 356,318 362.5,333 370,345.5 374,358 375,366" />
<polyline class="ig" points="382.3,283.3 384.7,296 390,310.5 392.5,320.5 387.5,333 385,343 389,355.5 392.5,363 401,372 395,391" />
<polyline class="ig" points="407,290 417.6,300.8 427.4,315.4 434.2,335 437.1,354.5 437.1,372 435,381 425.4,392 417.5,398.5 412.5,413.5 415,431 420,446" />
<polyline class="ig" points="437.8,302.8 448.9,319.3 455.7,340.8 457.7,362.3 456.7,380 451,403.5 455,423.5 471,446 481,465 482,478.5" />
<polyline class="ig" points="459.2,304 467.4,319.3 473.3,335 477.2,354.5 479.2,372 486,385.8 503.5,403.5 508.5,416 517,422 520,428.5 536,443.5 542,448.5 543.5,458.5" />
<polyline class="ig" points="483,301.5 493.8,323.2 503.6,332 517.3,346.7 527,358.4 536.9,367.2 545.6,369.2 551.5,365.3 555.4,360.4 549.6,354.5 551.5,342.8 556.4,323.2" />
<polyline class="ir" points="303,266.7 303.5,271.6 318.2,277.4 331.9,280.4 340.7,283.3 341.7,294 339.7,305.8 340,318 345,330.5 355,340.5 362.5,348 364,352" />
<line x1="432" y1="353.5" x2="489" y2="353.5" stroke="#d6a4a4" stroke-width=".9"/>
<line x1="460" y1="326" x2="460" y2="381.5" stroke="#74bfb6" stroke-width=".9"/>
<text class="sl" text-anchor="middle" transform="translate(375,180.5) rotate(-52)" y="3">SL1</text>
<text class="sl" text-anchor="middle" transform="translate(407.5,200.5) rotate(-52)" y="3">SL2</text>
<text class="sl" text-anchor="middle" transform="translate(445.6,228.9) rotate(-52)" y="3">SL3</text>
<text class="sl" text-anchor="middle" transform="translate(485.6,257) rotate(-52)" y="3">SL4</text>
<text class="sl" text-anchor="middle" transform="translate(526,285.5) rotate(-52)" y="3">SL5</text>
<text class="sl" text-anchor="middle" transform="translate(564.7,311) rotate(-52)" y="3">SL6</text>
<text class="sl" text-anchor="middle" transform="translate(603.5,340) rotate(-52)" y="3">SL7</text>
<line x1="270" y1="478" x2="270" y2="445" stroke="#1fbf8f" stroke-width="1.4"/><path d="M270,440 l-2,6 h4z" fill="#1fbf8f"/>
<line x1="272" y1="479.7" x2="306" y2="479.7" stroke="#e08a8a" stroke-width="1.4"/><path d="M311,479.7 l-6,-2 v4z" fill="#e08a8a"/>
<circle cx="269.5" cy="479.7" r="2" fill="#1f5fbf"/>
<text x="266.5" y="437" class="ax" fill="#2fae8c">Y</text><text x="312.5" y="483.5" class="ax" fill="#a07070">X</text>
<circle cx="723.3" cy="154.8" r="28.4" fill="none" stroke="#929395" stroke-opacity="0.75" stroke-width="6.2"/>
<rect x="712" y="143" width="23" height="23" fill="#252628" stroke="#77787a" stroke-width="0.8"/>
<text x="723.5" y="157.3" text-anchor="middle" class="top">TOP</text>
</svg>
<div style="left:184px;top:410px;width:184.500px;height:10px;background:rgba(62,64,68,.85)"></div>
<div style="left:190px;top:410.500px;font:italic 6.2px/9px 'Liberation Mono',monospace;color:#a9acb0;white-space:nowrap">: Enter command</div>
<div style="left:186px;top:412px;width:1.5px;height:6px;border-left:1px dotted #9a9da0"></div>
<svg class="abs" style="left:356px;top:413px" width="8" height="5"><path d="M1,4l2.500,-3l2.500,3z" fill="#cfcfcf"/></svg>
</div>
<div id="rpanel">
<div style="left:-.8px;top:10.500px;width:1.800px;height:422px;background:#3b3f43"></div>
<div style="left:4px;top:8.700px;width:200.500px;height:12.600px;background:#3d4145"></div>
<div style="left:6.800px;top:10px;font-size:7.1px;line-height:10px;color:#f0f0f0;white-space:nowrap;transform:scaleX(.93);transform-origin:0 50%">No Selection</div>
<svg class="abs" style="left:190px;top:8px" width="45" height="14"><path d="M5.500,6l2.300,2.300l2.300,-2.300" fill="none" stroke="#c8cace" stroke-width=".9"/><path d="M18,4.500h5.500l-2.200,2.800v3l-1.100,-.8v-2.200z" fill="none" stroke="#a8a0d0" stroke-width=".8"/><path d="M22.500,8.500h3M24,7v3" stroke="#e0c040" stroke-width=".9"/><rect x="28.800" y="0.700" width="12.600" height="12.600" fill="#dbe7fd"/><circle cx="35.100" cy="7.200" r="1.700" fill="#2f5fc0"/></svg>
<div style="left:121px;top:3px;width:9px;height:1.2px;border-top:1.2px dotted #c8c8c8"></div>
<div class="row hdr" style="top:24.35px"><span class="pm"></span><b>General</b></div>
<div class="row" style="top:34.50px"><b>Color</b><span style="left:58px;top:2px;width:6px;height:6px;background:#fff"></span><i style="left:67px">ByLayer</i></div>
<div class="row" style="top:44.65px"><b>Layer</b><i>0</i></div>
<div class="row" style="top:54.80px"><b>Linetype</b><span style="left:58px;top:4.700px;width:87px;height:.9px;background:#c8c8c8"></span><i style="left:148.500px">ByLayer</i></div>
<div class="row" style="top:64.95px"><b>Linetype scale</b><i>1</i></div>
<div class="row" style="top:75.10px"><b>Lineweight</b><span style="left:58px;top:4.700px;width:87px;height:.9px;background:#c8c8c8"></span><i style="left:148.500px">ByLayer</i></div>
<div class="row" style="top:85.25px"><b>Transparency</b><i>ByLayer</i></div>
<div class="row" style="top:95.40px"><b>Elevation</b><i>0 m</i></div>
<div class="row hdr" style="top:105.55px"><span class="pm"></span><b>View</b></div>
<div class="row" style="top:115.70px"><span class="pm plus"></span><b>Camera</b><i>0, 0, 198.9488</i></div>
<div class="row" style="top:125.85px"><span class="pm plus"></span><b>Target</b><i>0, 0, 197.9488</i></div>
<div class="row" style="top:136.00px"><b>Perspective</b><i>Off</i></div>
<div class="row" style="top:146.15px"><b>Lens length</b><i>50 mm</i></div>
<div class="row" style="top:156.30px"><b>Field of view</b><i>38.58</i></div>
<div class="row" style="top:166.45px"><b>Height</b><i style="color:#6e7276">242.5202 m</i></div>
<div class="row" style="top:176.60px"><b>Width</b><i style="color:#6e7276">315.5832 m</i></div>
<div class="row" style="top:186.75px"><b>Clipping</b><i>Off</i></div>
<div class="row" style="top:196.90px"><b>Front plane</b><i>1 m</i></div>
<div class="row" style="top:207.05px"><b>Back plane</b><i>0 m</i></div>
<div class="row" style="top:217.20px"><b>Visual style</b><i>Modeling</i></div>
<div class="row hdr" style="top:227.35px"><span class="pm"></span><b>Misc</b></div>
<div class="row" style="top:237.50px"><b style="width:50px;overflow:hidden">Annotation scale</b><i>1:1</i></div>
<div class="row" style="top:247.65px"><b>Default lighting</b><i>Off</i></div>
</div>
<div id="rstrip"><div style="left:0;top:0;width:24px;height:32.500px;background:#2e3236"></div>
<svg class="abs" style="left:0;top:0" width="24" height="200"><g transform="translate(13,16.500)" stroke="#e8e8e8" stroke-width=".9" fill="none"><path d="M-6,-2.700h12M-6,2.700h12" stroke-width=".8"/><circle cx="-2.500" cy="-2.700" r="1.200" fill="#2e3236"/><circle cx="3" cy="2.700" r="1.200" fill="#2e3236"/></g><g transform="translate(13,45.500)" stroke="#e8e8e8" stroke-width=".9" fill="none"><path d="M0,-8l7,4v8l-7,4l-7,-4v-8z"/><path d="M0,-5l4.500,2.500v5l-4.500,2.500l-4.500,-2.500v-5zM0,0v5M0,0l4.500,-2.500M0,0l-4.500,-2.500"/></g><g transform="translate(13,72)" stroke="#e8e8e8" stroke-width=".9" fill="none"><path d="M-2,-5.500h9l-3,4h-9zM-5,1.500l-1,1.300h9l3,-4M-5,4.500l-1,1.300h9l3,-4"/></g><g transform="translate(13,99)" stroke="#e8e8e8" stroke-width=".9" fill="none"><path d="M-2.500,-3v6.500a2.500,2.500 0 0 0 5,0v-8a1.700,1.700 0 0 0 -3.400,0v7.500"/></g><g transform="translate(13,125)" stroke="#e8e8e8" stroke-width=".9" fill="none"><path d="M-6,-2a6,6 0 0 1 12,0c0,3 -4,5 -6,7c-2,-2 -6,-4 -6,-7zM-2.500,-7.500c-1,3 0,9 2.500,12.500c2.500,-3.500 3.500,-9.500 2.500,-12.500M-1.500,5v2.500h3v-2.500"/></g><g transform="translate(13,152.500)" stroke="#e8e8e8" stroke-width=".9" fill="none"><path d="M-4,4.500a3.500,3.500 0 0 1 -.5,-7a5,5 0 0 1 9.500,0a3.500,3.500 0 0 1 -.5,7z"/><path d="M-1.500,1.500a1.500,1.500 0 0 1 2,-2M1.500,.5a1.500,1.500 0 0 1 -2,2" stroke-width=".8"/></g><g transform="translate(13,178.500)" stroke="#e8e8e8" stroke-width=".9" fill="none"><path d="M-6,-6h12v7h-12zM-1.500,1v4.500h3v-4.500M-6,-2.500h12M-3.500,-6v2M-1,-6v2M1.500,-6v2M4,-6v2"/><path d="M-.8,5.500v2.500h1.600v-2.500" /></g></svg></div>
<svg class="abs" style="left:0;top:0" width="1024" height="40"><path d="M0,0h9.500l-5.500,10l-1,10l-1.500,13h-1.500z" fill="#8f8f91"/><path d="M0,5c3,0 6,-2 7,-5" fill="none" stroke="#1c1c1c" stroke-width="2.200"/><path d="M1009.500,0h14.500v15.500z" fill="#8a8a8c"/><path d="M1012,0l1.500,2.500" stroke="#1c1c1c" stroke-width="1.800"/><path d="M1021.500,0c0,3 1,5 2.500,6" fill="none" stroke="#1c1c1c" stroke-width="1.600"/></svg>

</div></body></html>
